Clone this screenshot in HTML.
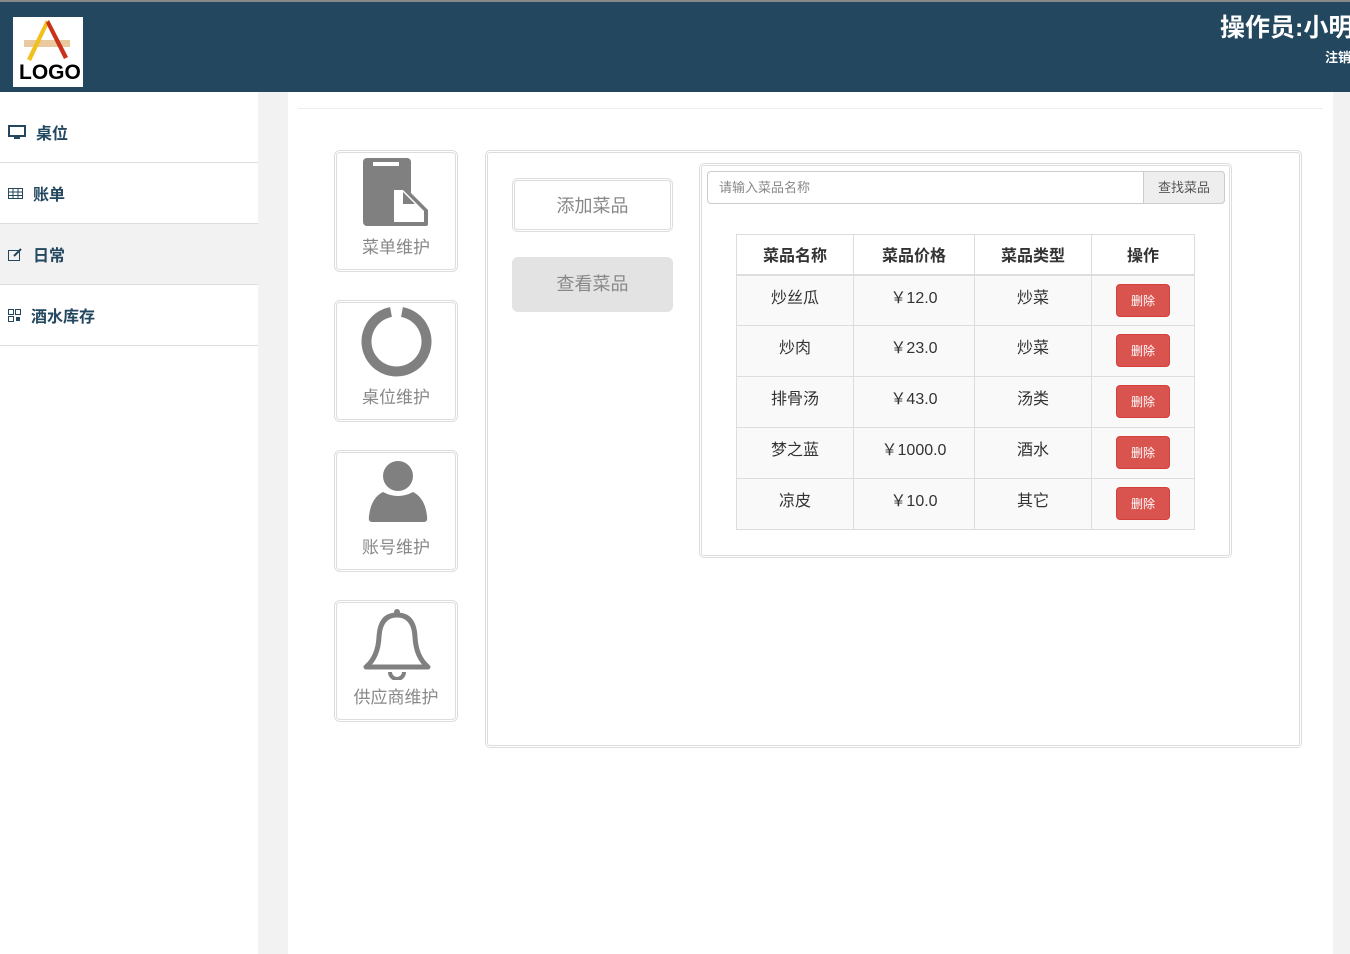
<!DOCTYPE html>
<html><head><meta charset="utf-8"><style>
*{box-sizing:border-box;margin:0;padding:0}
body{width:1350px;height:954px;overflow:hidden;background:#fff;font-family:"Liberation Sans","Noto Sans CJK SC",sans-serif;position:relative}
.abs{position:absolute}
#hdr{left:0;top:0;width:1350px;height:92px;background:#23475f;border-top:2px solid #888}
.side{left:0;width:258px;border-bottom:1px solid #ddd;color:#23475f;font-size:16px;font-weight:bold;display:flex;align-items:center;padding-left:8px}
.side svg{margin-right:10px}
.tile{left:334px;width:124px;height:122px;border:3px double #ddd;border-radius:6px;text-align:center;color:#888;font-size:17px}
.tile .lbl{position:absolute;left:0;right:0;bottom:11px}
.btn{left:512px;width:161px;border-radius:6px;text-align:center;color:#888;font-size:18px}
table{border-collapse:collapse;font-size:16px;color:#333}
td,th{border:1px solid #ddd;text-align:center}
th{height:40px;font-size:16px;border-bottom:2px solid #ddd}
td{height:51px;vertical-align:top;padding-top:8px;background:#f9f9f9}
.del{display:inline-block;background:#d9534f;color:#fff;font-size:12px;width:54px;height:33px;line-height:33px;border-radius:4px;border:1px solid #d43f3a;margin-top:0px}
</style></head><body>
<div id="hdr" class="abs">
 <div class="abs" style="left:13px;top:15px;width:70px;height:70px;background:#fff">
  <svg width="70" height="70" viewBox="0 0 70 70"><rect x="11" y="23" width="46" height="7" fill="#e9c9a0"/><path d="M33 3 L14 42 L18 44 L36 6Z" fill="#f2c01c"/><path d="M36 3 L55 40 L51 42 L33 6Z" fill="#c8321a"/></svg>
  <div class="abs" style="left:6px;top:44px;font-size:21px;font-weight:bold;color:#000">LOGO</div>
 </div>
 <div class="abs" style="left:1220px;top:6px;color:#fff;font-size:25px;font-weight:bold;white-space:nowrap">操作员:小明</div>
 <div class="abs" style="left:1325px;top:45px;color:#fff;font-size:13px;font-weight:bold;white-space:nowrap">注销</div>
</div>
<div class="abs" style="left:258px;top:92px;width:30px;height:862px;background:#f2f2f2"></div>
<div class="abs" style="left:1333px;top:92px;width:17px;height:862px;background:#f2f2f2"></div>
<div class="abs" style="left:298px;top:108px;width:1025px;height:1px;background:#eee"></div>
<div class="abs side" style="top:102px;height:61px"><svg width="18" height="14"><rect x="1" y="1" width="16" height="10" fill="none" stroke="#23475f" stroke-width="2"/><rect x="6" y="11" width="6" height="3" fill="#23475f"/></svg>桌位</div>
<div class="abs side" style="top:163px;height:61px"><svg width="15" height="11"><rect x=".5" y=".5" width="14" height="10" fill="none" stroke="#23475f"/><path d="M0 4H15M0 7.5H15M5 0V11M10 0V11" stroke="#23475f"/></svg>账单</div>
<div class="abs side" style="top:224px;height:61px;background:#f2f2f2"><svg width="15" height="13"><rect x=".5" y="2.5" width="11" height="10" fill="none" stroke="#23475f"/><path d="M6 8L13 1" stroke="#23475f" stroke-width="2"/></svg>日常</div>
<div class="abs side" style="top:285px;height:61px"><svg width="13" height="13"><path d="M.5 .5h5v5h-5zM7.5 .5h5v5h-5zM.5 7.5h5v5h-5z" fill="none" stroke="#23475f"/><rect x="8" y="8" width="4" height="4" fill="#23475f"/></svg>酒水库存</div>

<div class="abs tile" style="top:150px"><svg class="abs" style="left:22px;top:3px" width="72" height="72"><rect x="4" y="2" width="48" height="68" rx="4" fill="#808080"/><rect x="14" y="6" width="26" height="4" fill="#fff"/><path d="M31 30 h14 l24 24 v14 a2 2 0 0 1-2 2 h-34 a2 2 0 0 1-2-2z" fill="#808080"/><path d="M35 34 h9 l21 21 v11 h-30z" fill="#fff"/><path d="M44 36 v12 h12z" fill="#808080"/></svg><div class="lbl">菜单维护</div></div>
<div class="abs tile" style="top:300px"><svg class="abs" style="left:23px;top:2px" width="72" height="72"><path d="M31 7 A30 30 0 1 0 42 7" fill="none" stroke="#808080" stroke-width="10"/></svg><div class="lbl">桌位维护</div></div>
<div class="abs tile" style="top:450px"><svg class="abs" style="left:27px;top:6px" width="66" height="66"><circle cx="34" cy="17" r="15" fill="#808080"/><path d="M8 63 q-4 0-3-6 q2-18 14-24 q15 8 30 0 q12 6 14 24 q1 6-3 6z" fill="#808080"/></svg><div class="lbl">账号维护</div></div>
<div class="abs tile" style="top:600px"><svg class="abs" style="left:25px;top:3px" width="70" height="74"><circle cx="35" cy="6" r="3" fill="#808080"/><path d="M35 9 q-17 0-18 22 q-1 20-13 30 h62 q-12-10-13-30 q-1-22-18-22z" fill="none" stroke="#808080" stroke-width="5" stroke-linejoin="round"/><path d="M28 66 a7 7 0 0 0 14 0" fill="none" stroke="#808080" stroke-width="4"/></svg><div class="lbl">供应商维护</div></div>

<div class="abs" style="left:485px;top:150px;width:817px;height:598px;border:3px double #ddd;border-radius:5px"></div>
<div class="abs btn" style="top:178px;height:54px;line-height:50px;border:3px double #ddd">添加菜品</div>
<div class="abs btn" style="top:257px;height:55px;line-height:55px;background:#e3e3e3">查看菜品</div>

<div class="abs" style="left:699px;top:163px;width:533px;height:395px;border:3px double #ddd;border-radius:5px"></div>
<div class="abs" style="left:707px;top:171px;width:518px;height:33px;border:1px solid #ccc;border-radius:4px;font-size:13px;color:#888;line-height:31px;padding-left:11px">请输入菜品名称</div>
<div class="abs" style="left:1143px;top:171px;width:82px;height:33px;border:1px solid #ccc;border-radius:0 4px 4px 0;background:#eee;font-size:13px;color:#555;line-height:31px;text-align:center">查找菜品</div>
<table class="abs" style="left:736px;top:234px;width:459px">
<tr><th style="width:117px">菜品名称</th><th style="width:121px">菜品价格</th><th style="width:117px">菜品类型</th><th>操作</th></tr>
<tr><td>炒丝瓜</td><td>￥12.0</td><td>炒菜</td><td><span class="del">删除</span></td></tr>
<tr><td>炒肉</td><td>￥23.0</td><td>炒菜</td><td><span class="del">删除</span></td></tr>
<tr><td>排骨汤</td><td>￥43.0</td><td>汤类</td><td><span class="del">删除</span></td></tr>
<tr><td>梦之蓝</td><td>￥1000.0</td><td>酒水</td><td><span class="del">删除</span></td></tr>
<tr><td>凉皮</td><td>￥10.0</td><td>其它</td><td><span class="del">删除</span></td></tr>
</table>
</body></html>
